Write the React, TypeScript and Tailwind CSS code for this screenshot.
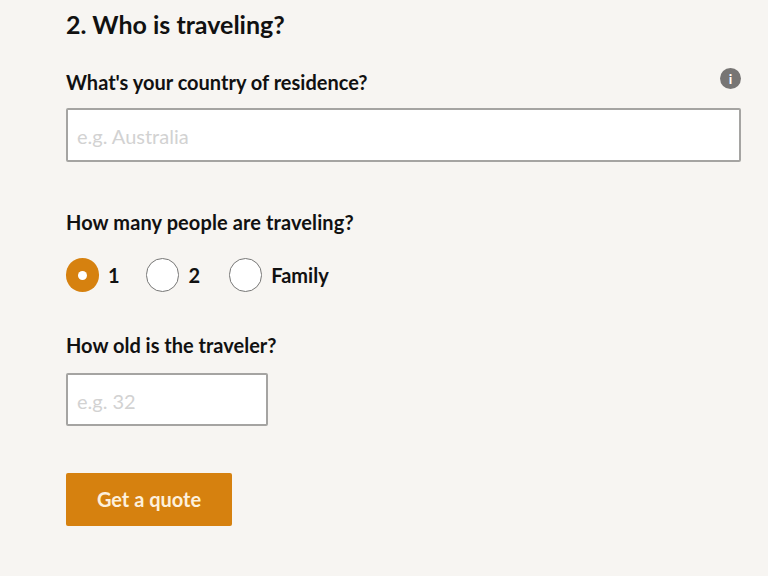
export default function App() {
  const font = { fontFamily: '"Lato", "Noto Sans", sans-serif' };
  const label = "text-[20px] leading-[28px] font-bold text-[#111111]";
  return (
    <div style={font} className="w-[768px] h-[576px] overflow-hidden bg-[#f7f5f2] pl-[66px] pr-[27px] pt-[7px] flex flex-col">
      <h2 className="text-[25px] leading-[34px] font-bold text-[#111111]">2. Who is traveling?</h2>
      <div className="mt-[27px] flex items-center justify-between h-[28px]">
        <span className={label}>What's your country of residence?</span>
        <span className="w-[21px] h-[21px] rounded-full bg-[#777574] text-white flex items-center justify-center text-[14px] font-bold leading-none -mt-[7px]">i</span>
      </div>
      <input readOnly placeholder="e.g. Australia" className="mt-[12px] w-full h-[54px] bg-white border-2 border-[#a5a4a2] rounded-[2px] pl-[9px] pt-[2px] text-[20px] placeholder:text-[#d2d2d2] outline-none" />
      <div className={"mt-[46px] tracking-[0.1px] " + label}>How many people are traveling?</div>
      <div className="mt-[22px] flex items-center h-[34px]">
        <span className="w-[33px] h-[34px] rounded-full bg-[#d6810f] flex items-center justify-center">
          <span className="w-[9px] h-[9px] rounded-full bg-white" />
        </span>
        <span className={"ml-[9px] " + label}>1</span>
        <span className="ml-[26px] w-[33px] h-[34px] rounded-full bg-white border border-[#777776]" />
        <span className={"ml-[10px] " + label}>2</span>
        <span className="ml-[29px] w-[33px] h-[34px] rounded-full bg-white border border-[#777776]" />
        <span className={"ml-[9px] " + label}>Family</span>
      </div>
      <div className={"mt-[39px] " + label}>How old is the traveler?</div>
      <input readOnly placeholder="e.g. 32" className="mt-[14px] w-[202px] h-[53px] bg-white border-2 border-[#a5a4a2] rounded-[2px] pl-[9px] pt-[3px] text-[20px] placeholder:text-[#d2d2d2] outline-none" />
      <button className="mt-[47px] w-[166px] h-[53px] pb-[2px] bg-[#d6810f] rounded-[2px] text-[#fdf0dc] text-[20px] font-bold flex items-center justify-center">Get a quote</button>
    </div>
  );
}
